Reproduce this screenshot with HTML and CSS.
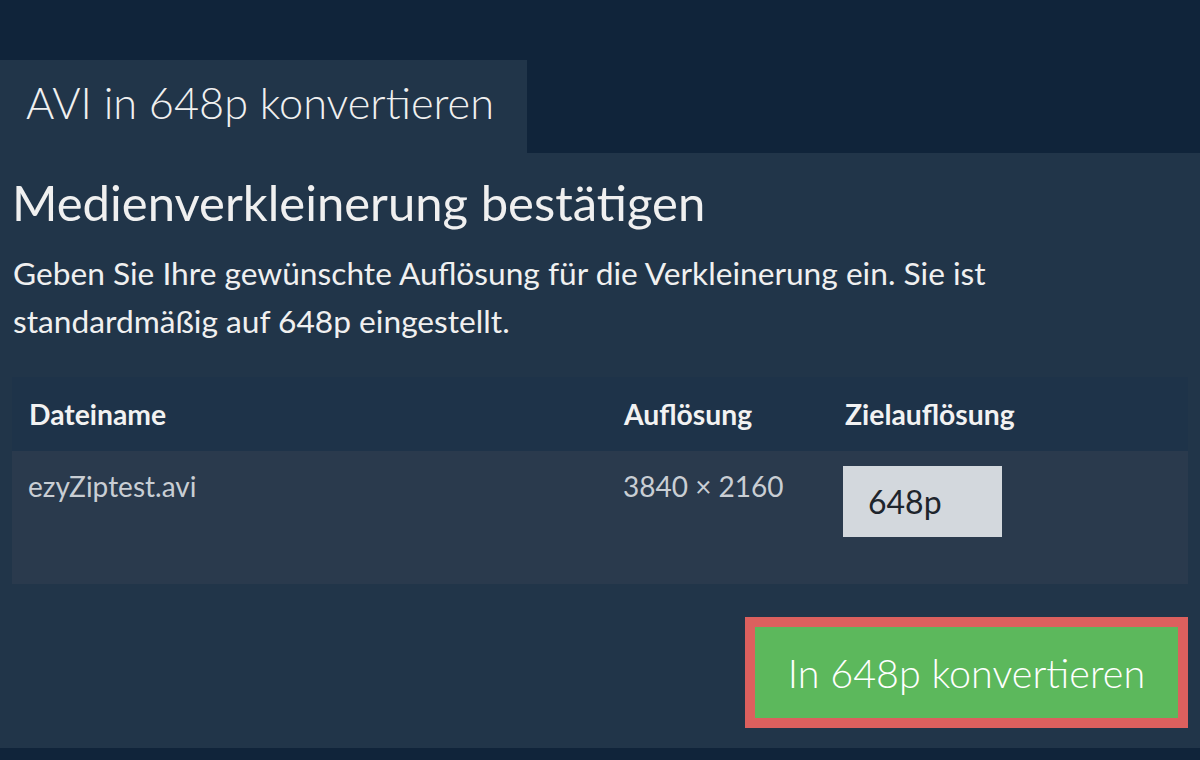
FILE: index.html
```html
<!DOCTYPE html>
<html lang="de">
<head>
<meta charset="utf-8">
<title>AVI in 648p konvertieren</title>
<link rel="stylesheet" href="styles.css">
</head>
<body>
<div class="page">
  <div class="tab">AVI in 648p konvertieren</div>
  <div class="panel">
    <h1 class="title">Medienverkleinerung bestätigen</h1>
    <p class="lead">Geben Sie Ihre gewünschte Auflösung für die Verkleinerung ein. Sie ist standardmäßig auf 648p eingestellt.</p>
    <table class="files">
      <thead>
        <tr>
          <th class="c1">Dateiname</th>
          <th class="c2">Auflösung</th>
          <th class="c3">Zielauflösung</th>
        </tr>
      </thead>
      <tbody>
        <tr>
          <td>ezyZiptest.avi</td>
          <td>3840 × 2160</td>
          <td><input class="target" type="text" value="648p"></td>
        </tr>
      </tbody>
    </table>
    <div class="actions">
      <button class="convert" type="button">In 648p konvertieren</button>
    </div>
  </div>
</div>
</body>
</html>
```

FILE: styles.css
```css
html, body {
  margin: 0;
  padding: 0;
  background: #10243a;
  font-family: Lato, "Open Sans", sans-serif;
  color: #eeeeee;
}
.page {
  padding-top: 60px;
  height: 760px;
  box-sizing: border-box;
}
.tab {
  width: 527px;
  height: 93px;
  box-sizing: border-box;
  background: #213549;
  font-weight: 300;
  font-size: 43.3px;
  padding: 17px 0 0 26px;
  line-height: 50px;
  color: #f0f0f0;
}
.panel {
  background: #213549;
  height: 595px;
  padding: 0 12px;
  box-sizing: border-box;
  overflow: hidden;
}
.title {
  margin: 0;
  padding-top: 21px;
  font-size: 49px;
  font-weight: 400;
  line-height: 56px;
  color: #f0f0f0;
  padding-left: 0;
  white-space: nowrap;
}
.lead {
  margin: 19px 0 0 0;
  font-size: 31.7px;
  line-height: 48px;
  color: #f0f0f0;
  padding-left: 1px;
  width: 1000px;
}
.files {
  margin-top: 32px;
  width: 1176px;
  border-collapse: collapse;
  table-layout: fixed;
}
.files th {
  background: #1e3349;
  height: 74px;
  text-align: left;
  font-size: 28.3px;
  font-weight: 700;
  padding: 0 17px;
  color: #f2f2f2;
  white-space: nowrap;
}
.c1 { width: 561px; }
.c2 { width: 187px; }
.files td {
  background: #2a3a4d;
  height: 133px;
  vertical-align: top;
  padding: 18px 16px 0 16px;
  font-size: 28px;
  color: #c9ced4;
  box-sizing: border-box;
  white-space: nowrap;
}
.target {
  display: block;
  width: 159px;
  height: 71px;
  box-sizing: border-box;
  margin: -3px 0 0 -1px;
  border: none;
  background: #d3d8dd;
  color: #1e252c;
  font-family: Lato, sans-serif;
  font-size: 32px;
  padding: 0 0 0 25px;
  outline: none;
}
.actions {
  display: flex;
  justify-content: flex-end;
  margin-top: 33px;
}
.convert {
  width: 443px;
  height: 111px;
  background: #5cb85c;
  border: 10px solid #dc605e;
  color: #ffffff;
  font-family: Lato, sans-serif;
  font-weight: 300;
  font-size: 39.5px;
  padding: 0;
  cursor: pointer;
}
```
